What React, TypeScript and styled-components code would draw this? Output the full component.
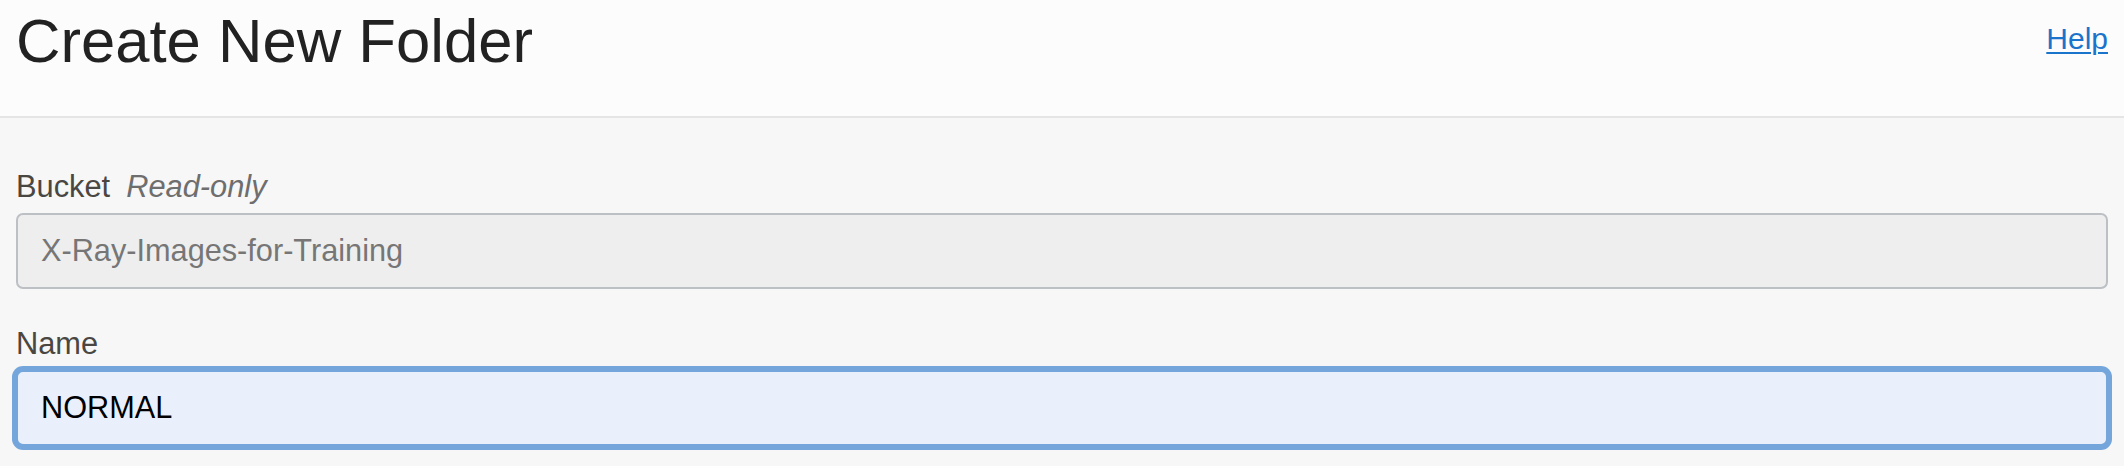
import React from "react";
import styled, { createGlobalStyle } from "styled-components";

const Global = createGlobalStyle`
  html, body {
    margin: 0;
    padding: 0;
    background: #f7f7f7;
    font-family: "Liberation Sans", Arial, Helvetica, sans-serif;
  }
  * { box-sizing: border-box; }
`;

const Page = styled.div`
  width: 2124px;
  min-height: 466px;
  background: #f7f7f7;
`;

const Header = styled.header`
  height: 118px;
  padding: 0 16px;
  background: #fcfcfc;
  border-bottom: 2px solid #e5e5e5;
  display: flex;
  justify-content: space-between;
  align-items: flex-start;
`;

const Title = styled.h1`
  margin: 10px 0 0;
  font-size: 61.6px;
  line-height: 62px;
  font-weight: 400;
  color: #222222;
`;

const HelpLink = styled.a`
  margin-top: 24px;
  font-size: 30px;
  line-height: 30px;
  color: #1b74cb;
  text-decoration: underline;
  text-underline-offset: 3px;
  text-decoration-thickness: 2px;
  cursor: pointer;
`;

const Body = styled.main`
  padding: 54px 16px 0;
  display: flex;
  flex-direction: column;
`;

const Field = styled.div`
  display: flex;
  flex-direction: column;
  gap: 11px;
  margin-bottom: 40px;
`;

const Label = styled.label`
  display: flex;
  align-items: baseline;
  gap: 16px;
  font-size: 30.8px;
  line-height: 30px;
  color: #4a4743;
`;

const Hint = styled.span`
  font-style: italic;
  color: #6e6e6e;
`;

const TextInput = styled.input<{ $focused?: boolean; $readOnlyLook?: boolean }>`
  display: block;
  width: 100%;
  height: 76px;
  padding: 0 23px;
  border-radius: 7px;
  font-family: "Liberation Sans", Arial, Helvetica, sans-serif;
  font-size: 30.7px;
  outline: none;
  border: 2px solid ${(p) => (p.$focused ? "#74a6dc" : "#bcc0c5")};
  background: ${(p) => (p.$focused ? "#e9f0fc" : "#eeeeee")};
  color: ${(p) => (p.$readOnlyLook ? "#767676" : "#000000")};
  box-shadow: ${(p) => (p.$focused ? "0 0 0 4px #74a6dc" : "none")};
`;

export default function App() {
  return (
    <Page>
      <Global />
      <Header>
        <Title>Create New Folder</Title>
        <HelpLink>Help</HelpLink>
      </Header>
      <Body>
        <Field>
          <Label>
            Bucket <Hint>Read-only</Hint>
          </Label>
          <TextInput readOnly $readOnlyLook defaultValue="X-Ray-Images-for-Training" />
        </Field>
        <Field>
          <Label>Name</Label>
          <TextInput $focused defaultValue="NORMAL" />
        </Field>
      </Body>
    </Page>
  );
}
